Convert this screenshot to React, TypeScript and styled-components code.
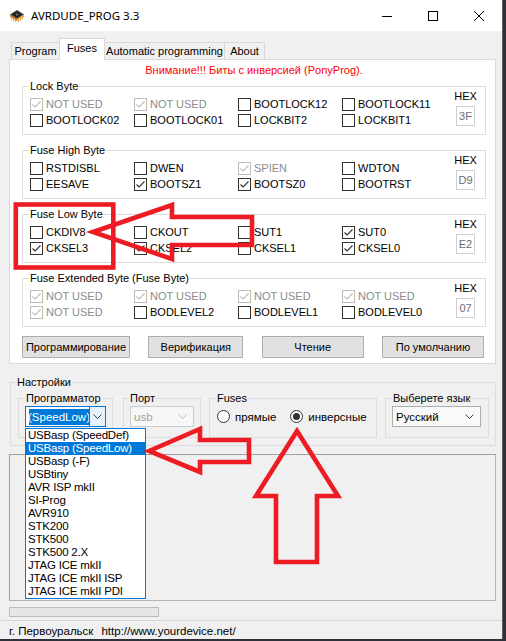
import React from "react";
import styled, { createGlobalStyle } from "styled-components";

const UI = `"Liberation Sans", Arial, sans-serif`;
const RED = "#ed1c24";

const GlobalStyle = createGlobalStyle`
  html, body { margin: 0; padding: 0; }
  body { background: #2e3137; font-family: ${UI}; }
  * { box-sizing: border-box; }
`;

type Bit = { label: string; checked?: boolean; disabled?: boolean };
type FuseByte = { title: string; hex: string; bits: Bit[] };

const NU: Bit = { label: "NOT USED", checked: true, disabled: true };

const fuseBytes: FuseByte[] = [
  {
    title: "Lock Byte",
    hex: "3F",
    bits: [NU, NU, { label: "BOOTLOCK12" }, { label: "BOOTLOCK11" }, { label: "BOOTLOCK02" }, { label: "BOOTLOCK01" }, { label: "LOCKBIT2" }, { label: "LOCKBIT1" }],
  },
  {
    title: "Fuse High Byte",
    hex: "D9",
    bits: [
      { label: "RSTDISBL" },
      { label: "DWEN" },
      { label: "SPIEN", checked: true, disabled: true },
      { label: "WDTON" },
      { label: "EESAVE" },
      { label: "BOOTSZ1", checked: true },
      { label: "BOOTSZ0", checked: true },
      { label: "BOOTRST" },
    ],
  },
  {
    title: "Fuse Low Byte",
    hex: "E2",
    bits: [
      { label: "CKDIV8" },
      { label: "CKOUT" },
      { label: "SUT1" },
      { label: "SUT0", checked: true },
      { label: "CKSEL3", checked: true },
      { label: "CKSEL2", checked: true },
      { label: "CKSEL1" },
      { label: "CKSEL0", checked: true },
    ],
  },
  {
    title: "Fuse Extended Byte (Fuse Byte)",
    hex: "07",
    bits: [NU, NU, NU, NU, NU, { label: "BODLEVEL2" }, { label: "BODLEVEL1" }, { label: "BODLEVEL0" }],
  },
];

const programmers = [
  "USBasp (SpeedDef)",
  "USBasp (SpeedLow)",
  "USBasp (-F)",
  "USBtiny",
  "AVR ISP mkII",
  "SI-Prog",
  "AVR910",
  "STK200",
  "STK500",
  "STK500 2.X",
  "JTAG ICE mkII",
  "JTAG ICE mkII ISP",
  "JTAG ICE mkII PDI",
];

/* ---------- window frame ---------- */

const Desktop = styled.div`
  position: relative;
  width: 506px;
  height: 641px;
  overflow: hidden;
  background: #2e3137;
`;

const Window = styled.div`
  position: relative;
  width: 503px;
  height: 639px;
  background: #f0f0f0;
  border-right: 1px solid #5e5e5e;
  display: flex;
  flex-direction: column;
  font: 11px ${UI};
  color: #000;
`;

const TitleBar = styled.div`
  height: 31px;
  flex-shrink: 0;
  background: #fff;
  display: flex;
  align-items: center;
`;

const TitleText = styled.span`
  flex: 1;
  margin-left: 6px;
  font: 11.5px "Noto Sans", "Open Sans", sans-serif;
  color: #000;
`;

const CaptionButton = styled.div`
  width: 46px;
  height: 31px;
  display: flex;
  align-items: center;
  justify-content: center;
`;

const Client = styled.div`
  flex: 1;
  display: flex;
  flex-direction: column;
`;

/* ---------- tabs ---------- */

const TabStrip = styled.div`
  display: flex;
  align-items: flex-end;
  height: 21px;
  margin: 7px 0 0 11px;
  position: relative;
  z-index: 1;
`;

const Tab = styled.div<{ $w: number; $active?: boolean }>`
  width: ${(p) => p.$w}px;
  height: ${(p) => (p.$active ? 22 : 17)}px;
  margin-left: -1px;
  margin-bottom: ${(p) => (p.$active ? -1 : 0)}px;
  border: 1px solid #d9d9d9;
  border-bottom: none;
  background: ${(p) => (p.$active ? "#fff" : "#f0f0f0")};
  position: relative;
  z-index: ${(p) => (p.$active ? 2 : 1)};
  display: flex;
  align-items: center;
  justify-content: center;
  padding-bottom: ${(p) => (p.$active ? 4 : 0)}px;
  font-size: 11px;
  white-space: nowrap;
  &:first-child {
    margin-left: 0;
  }
`;

const Panel = styled.div`
  margin-left: 9px;
  width: 487px;
  height: 305px;
  border: 1px solid #d9d9d9;
  background: #fff;
  display: flex;
  flex-direction: column;
  padding: 4px 9px 0 12px;
`;

const Warning = styled.div`
  line-height: 13px;
  text-align: center;
  color: #ff0000;
  font-size: 11px;
  margin-bottom: 3px;
`;

/* ---------- fuse groups ---------- */

const Group = styled.fieldset`
  margin: 0;
  min-width: 0;
  width: 464px;
  border: 1px solid #dcdcdc;
  padding: 3px 0 6px 7px;
  display: flex;
  & + & {
    margin-top: 9px;
  }
`;

const Legend = styled.legend<{ $shift?: number }>`
  padding: 0 1px;
  margin-left: ${(p) => p.$shift ?? 0}px;
  line-height: 13px;
  font-size: 11px;
`;

const BitGrid = styled.div`
  display: grid;
  grid-template-columns: repeat(4, 104px);
  grid-auto-rows: 16px;
`;

const BitItem = styled.label<{ $disabled?: boolean }>`
  display: flex;
  align-items: center;
  gap: 3px;
  white-space: nowrap;
  color: ${(p) => (p.$disabled ? "#8c8c8c" : "#000")};
`;

const Box = styled.span<{ $disabled?: boolean }>`
  width: 13px;
  height: 13px;
  flex-shrink: 0;
  border: 1px solid ${(p) => (p.$disabled ? "#bcbcbc" : "#333")};
  background: #fff;
  display: flex;
`;

const HexCol = styled.div`
  margin: -6px 9px 0 auto;
  width: 21px;
  display: flex;
  flex-direction: column;
  align-items: center;
`;

const HexLabel = styled.div`
  line-height: 13px;
  font-size: 11px;
`;

const HexBox = styled.div`
  margin-top: 3px;
  width: 19px;
  height: 20px;
  border: 1px solid #cfcfcf;
  color: #6d6d6d;
  display: flex;
  align-items: center;
  justify-content: center;
  font-size: 11px;
`;

const ButtonRow = styled.div`
  margin-top: 9px;
  width: 462px;
  display: flex;
  justify-content: space-between;
`;

const PushButton = styled.button<{ $w: number }>`
  width: ${(p) => p.$w}px;
  height: 22px;
  padding: 0;
  background: #e1e1e1;
  border: 1px solid #adadad;
  font: 11px ${UI};
  color: #000;
`;

/* ---------- settings ---------- */

const Settings = styled.fieldset`
  margin: 12px 0 0 10px;
  width: 486px;
  min-width: 0;
  border: 1px solid #dcdcdc;
  padding: 3px 0 7px 7px;
  display: flex;
  gap: 8px;
`;

const SubGroup = styled.fieldset<{ $w: number; $gap?: number }>`
  margin: 0 0 0 ${(p) => p.$gap ?? 0}px;
  width: ${(p) => p.$w}px;
  min-width: 0;
  border: 1px solid #dcdcdc;
  padding: 1px 0 10px 6px;
  display: flex;
  align-items: center;
`;

const Combo = styled.div<{ $w: number; $tone: "focus" | "off" | "plain" }>`
  width: ${(p) => p.$w}px;
  height: 21px;
  display: flex;
  align-items: center;
  border: 1px solid ${(p) => (p.$tone === "focus" ? "#0078d7" : p.$tone === "off" ? "#cccccc" : "#adadad")};
  background: ${(p) => (p.$tone === "off" ? "#f7f7f7" : p.$tone === "plain" ? "#f9f9f9" : "#fff")};
  color: ${(p) => (p.$tone === "off" ? "#a0a0a0" : "#000")};
  padding-left: 3px;
  font-size: 11.5px;
`;

const ComboText = styled.span`
  flex: 1;
  white-space: nowrap;
  overflow: hidden;
`;

const Selection = styled.span`
  display: inline-block;
  background: #0078d7;
  color: #fff;
  line-height: 16px;
  margin-left: -2px;
  padding: 0 1px;
  border-right: 1px solid #e07000;
`;

const DropButton = styled.div<{ $hot?: boolean }>`
  width: 16px;
  height: 19px;
  display: flex;
  align-items: center;
  justify-content: center;
  background: ${(p) => (p.$hot ? "#e5f1fb" : "transparent")};
  border-left: 1px solid ${(p) => (p.$hot ? "#0078d7" : "transparent")};
  margin-right: ${(p) => (p.$hot ? 0 : 3)}px;
`;

const RadioRow = styled.div`
  display: flex;
  align-items: center;
  gap: 14px;
  height: 21px;
  padding-left: 1px;
`;

const RadioItem = styled.label`
  display: flex;
  align-items: center;
  gap: 5px;
  font-size: 11.5px;
`;

const RadioCircle = styled.span<{ $on?: boolean }>`
  width: 13px;
  height: 13px;
  border-radius: 50%;
  border: 1px solid #333;
  background: #fff;
  display: flex;
  align-items: center;
  justify-content: center;
  &::after {
    content: "";
    width: 7px;
    height: 7px;
    border-radius: 50%;
    background: ${(p) => (p.$on ? "#333" : "transparent")};
  }
`;

/* ---------- log / status ---------- */

const LogBox = styled.div`
  margin: 8px 0 0 9px;
  width: 487px;
  height: 147px;
  border: 1px solid #a0a0a0;
  border-right-color: #b4b4b4;
  border-bottom-color: #b4b4b4;
`;

const Progress = styled.div`
  margin: 6px 0 0 9px;
  width: 150px;
  height: 10px;
  border: 1px solid #bcbcbc;
  background: #e6e6e6;
`;

const StatusBar = styled.div`
  margin-top: 3px;
  flex: 1;
  border-top: 1px solid #d7d7d7;
  display: flex;
  align-items: center;
  gap: 8px;
  padding: 1px 0 0 9px;
  font-size: 11.5px;
`;

/* ---------- open dropdown ---------- */

const DropList = styled.ul`
  position: absolute;
  left: 25px;
  top: 428px;
  width: 121px;
  margin: 0;
  padding: 0;
  list-style: none;
  background: #fff;
  border: 1px solid #0078d7;
  z-index: 5;
`;

const DropItem = styled.li<{ $sel?: boolean }>`
  height: 13px;
  line-height: 13px;
  padding-left: 2px;
  font-size: 11.5px;
  letter-spacing: -0.2px;
  white-space: nowrap;
  background: ${(p) => (p.$sel ? "#0078d7" : "transparent")};
  color: ${(p) => (p.$sel ? "#fff" : "#000")};
`;

const Overlay = styled.svg`
  position: absolute;
  left: 0;
  top: 0;
  pointer-events: none;
  z-index: 10;
`;

/* ---------- pieces ---------- */

function ChipIcon() {
  return (
    <svg width="16" height="16" viewBox="0 0 16 16" style={{ marginLeft: 9 }}>
      <polygon points="8,2 15,6.5 8,11 1,6.5" fill="#3a3a3a" />
      <polygon points="1,6.5 8,11 8,13 1,8.5" fill="#c77a12" />
      <polygon points="15,6.5 8,11 8,13 15,8.5" fill="#f2a33a" />
      <path d="M2.5 9.3v2M4.5 10.5v2M6.5 11.8v2M9.5 11.8v2M11.5 10.5v2M13.5 9.3v2" stroke="#e89a2c" strokeWidth="1.2" />
      <polygon points="8,3.5 12.5,6.5 8,9.5 3.5,6.5" fill="#1c1c1c" />
      <circle cx="8" cy="6.5" r="1.3" fill="#6a6a6a" />
    </svg>
  );
}

function CheckMark({ color }: { color: string }) {
  return (
    <svg width="11" height="11" viewBox="0 0 11 11">
      <polyline points="1.5,5.5 4,8 9.5,2.5" fill="none" stroke={color} strokeWidth="1.1" />
    </svg>
  );
}

function Chevron({ color }: { color: string }) {
  return (
    <svg width="9" height="5" viewBox="0 0 9 5">
      <polyline points="0.5,0.5 4.5,4.5 8.5,0.5" fill="none" stroke={color} strokeWidth="1" />
    </svg>
  );
}

function FuseGroup({ byte }: { byte: FuseByte }) {
  return (
    <Group>
      <Legend $shift={-1}>{byte.title}</Legend>
      <BitGrid>
        {byte.bits.map((b, i) => (
          <BitItem key={i} $disabled={b.disabled}>
            <Box $disabled={b.disabled}>{b.checked && <CheckMark color={b.disabled ? "#bcbcbc" : "#333"} />}</Box>
            {b.label}
          </BitItem>
        ))}
      </BitGrid>
      <HexCol>
        <HexLabel>HEX</HexLabel>
        <HexBox>{byte.hex}</HexBox>
      </HexCol>
    </Group>
  );
}

function Annotations() {
  const s = { fill: "none", stroke: RED, strokeWidth: 4.6, strokeLinejoin: "miter" as const };
  return (
    <Overlay width="506" height="641" viewBox="0 0 506 641">
      <rect x="15.8" y="204.5" width="97.5" height="63" {...s} />
      <polygon points="93,232 172,205 172,217 252,217 252,245 172,245 172,259" {...s} />
      <polygon points="149,451 200,429 200,440 249,440 249,462 200,462 200,472" {...s} />
      <polygon points="297,431 338,496 317,496 317,562 276,562 276,496 256,496" {...s} />
    </Overlay>
  );
}

export default function App() {
  return (
    <>
      <GlobalStyle />
      <Desktop>
        <Window>
          <TitleBar>
            <ChipIcon />
            <TitleText>AVRDUDE_PROG 3.3</TitleText>
            <CaptionButton>
              <svg width="10" height="10" viewBox="0 0 10 10">
                <line x1="0" y1="5.5" x2="10" y2="5.5" stroke="#000" strokeWidth="1" />
              </svg>
            </CaptionButton>
            <CaptionButton>
              <svg width="10" height="10" viewBox="0 0 10 10">
                <rect x="0.5" y="0.5" width="9" height="9" fill="none" stroke="#000" strokeWidth="1" />
              </svg>
            </CaptionButton>
            <CaptionButton>
              <svg width="10" height="10" viewBox="0 0 10 10">
                <path d="M0 0L10 10M10 0L0 10" stroke="#000" strokeWidth="1" />
              </svg>
            </CaptionButton>
          </TitleBar>

          <Client>
            <TabStrip>
              <Tab $w={49}>Program</Tab>
              <Tab $w={46} $active>
                Fuses
              </Tab>
              <Tab $w={121}>Automatic programming</Tab>
              <Tab $w={41}>About</Tab>
            </TabStrip>

            <Panel>
              <Warning>Внимание!!! Биты с инверсией (PonyProg).</Warning>
              {fuseBytes.map((b) => (
                <FuseGroup key={b.title} byte={b} />
              ))}
              <ButtonRow>
                <PushButton $w={108}>Программирование</PushButton>
                <PushButton $w={95}>Верификация</PushButton>
                <PushButton $w={102}>Чтение</PushButton>
                <PushButton $w={102}>По умолчанию</PushButton>
              </ButtonRow>
            </Panel>

            <Settings>
              <Legend $shift={-2}>Настройки</Legend>
              <SubGroup $w={95}>
                <Legend>Программатор</Legend>
                <Combo $w={81} $tone="focus">
                  <ComboText>
                    <Selection>(SpeedLow)</Selection>
                  </ComboText>
                  <DropButton $hot>
                    <Chevron color="#404040" />
                  </DropButton>
                </Combo>
              </SubGroup>
              <SubGroup $w={78} $gap={2}>
                <Legend $shift={-1}>Порт</Legend>
                <Combo $w={64} $tone="off">
                  <ComboText>usb</ComboText>
                  <DropButton>
                    <Chevron color="#bcbcbc" />
                  </DropButton>
                </Combo>
              </SubGroup>
              <SubGroup $w={168}>
                <Legend>Fuses</Legend>
                <RadioRow>
                  <RadioItem>
                    <RadioCircle />
                    прямые
                  </RadioItem>
                  <RadioItem>
                    <RadioCircle $on />
                    инверсные
                  </RadioItem>
                </RadioRow>
              </SubGroup>
              <SubGroup $w={104}>
                <Legend>Выберете язык</Legend>
                <Combo $w={89} $tone="plain">
                  <ComboText>Русский</ComboText>
                  <DropButton>
                    <Chevron color="#404040" />
                  </DropButton>
                </Combo>
              </SubGroup>
            </Settings>

            <LogBox />
            <Progress />
            <StatusBar>
              <span>г. Первоуральск</span>
              <span>http://www.yourdevice.net/</span>
            </StatusBar>
          </Client>

          <DropList>
            {programmers.map((p) => (
              <DropItem key={p} $sel={p === "USBasp (SpeedLow)"}>
                {p}
              </DropItem>
            ))}
          </DropList>
        </Window>
        <Annotations />
      </Desktop>
    </>
  );
}
